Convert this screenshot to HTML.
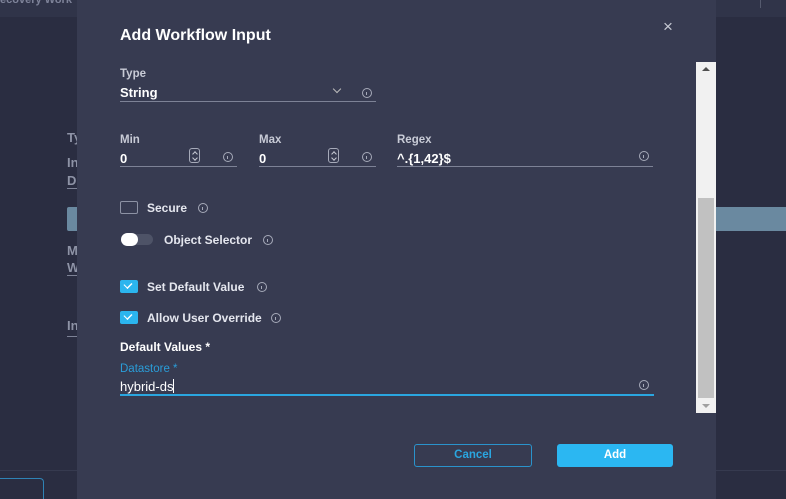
<!DOCTYPE html>
<html><head><style>
*{margin:0;padding:0;box-sizing:border-box}
html,body{width:786px;height:499px;overflow:hidden}
body{background:#2a2d41;font-family:"Liberation Sans",sans-serif;position:relative;color:#fff}
.a{position:absolute}
.topbar{left:0;top:0;width:786px;height:17px;background:#303449}
.ghost{color:#8e93a6;font-size:13px;font-weight:bold}
.modal{left:77px;top:0;width:639px;height:499px;background:#373b51}
.lbl{font-size:11.5px;color:#c8cbd6;font-weight:bold}
.val{font-size:13px;font-weight:bold;color:#fff}
.ul{height:1px;background:#7d8296}
.info{width:10px;height:10px;border:1.3px solid #a6aab9;border-radius:50%}
.info:after{content:"";position:absolute;left:3px;top:2.5px;width:1.3px;height:3px;background:#a6aab9}
.cb{width:18px;height:13px;border-radius:2px}
.cbt{font-size:12px;font-weight:bold;color:#e4e6ee}
.spin{width:11px;height:15px;border:1.2px solid #a6aab9;border-radius:3px}
.spin:before,.spin:after{content:"";position:absolute;left:2.5px;width:3px;height:3px;border-left:1px solid #c6c9d3;border-top:1px solid #c6c9d3}
.spin:before{top:2.5px;transform:rotate(45deg)}
.spin:after{top:7px;transform:rotate(225deg)}
</style></head><body>
<div class="a topbar"></div>
<div class="a ghost" style="left:0;top:-6px;font-size:11px;color:#7e8399">ecovery Work</div>
<div class="a ghost" style="left:67px;top:130px">Ty</div>
<div class="a ghost" style="left:67px;top:155px">In</div>
<div class="a ghost" style="left:67px;top:173px">D</div>
<div class="a" style="left:67px;top:188px;width:12px;height:1px;background:#7d8296"></div>
<div class="a" style="left:67px;top:207px;width:12px;height:24px;background:#6a89a0;border-radius:2px"></div>
<div class="a" style="left:716px;top:207px;width:70px;height:24px;background:#6a89a0"></div>
<div class="a ghost" style="left:67px;top:243px">M</div>
<div class="a ghost" style="left:67px;top:260px">W</div>
<div class="a" style="left:67px;top:275px;width:12px;height:1px;background:#7d8296"></div>
<div class="a ghost" style="left:67px;top:318px">In</div>
<div class="a" style="left:67px;top:336px;width:12px;height:1px;background:#7d8296"></div>
<div class="a" style="left:0;top:470px;width:786px;height:1px;background:#363a4f"></div>
<div class="a" style="left:-4px;top:478px;width:48px;height:21px;border:1px solid #2f83b5;border-bottom:none;border-radius:4px 4px 0 0"></div>
<div class="a" style="left:760px;top:0;width:1px;height:8px;background:#555a6e"></div>

<div class="a modal"></div>
<div class="a" style="left:120px;top:27px;font-size:16px;font-weight:bold">Add Workflow Input</div>
<div class="a" style="left:663px;top:17px;font-size:17px;color:#c7cad4">×</div>

<div class="a lbl" style="left:120px;top:68px">Type</div>
<div class="a val" style="left:120px;top:85px">String</div>
<div class="a" style="left:334px;top:86px;width:6px;height:6px;border-right:1.3px solid #bbb;border-bottom:1.3px solid #bbb;transform:rotate(45deg)"></div>
<div class="a info" style="left:362px;top:88px"></div>
<div class="a ul" style="left:120px;top:101px;width:256px"></div>

<div class="a lbl" style="left:120px;top:134px">Min</div>
<div class="a val" style="left:120px;top:151px">0</div>
<div class="a spin" style="left:189px;top:148px"></div>
<div class="a info" style="left:223px;top:152px"></div>
<div class="a ul" style="left:120px;top:166px;width:117px"></div>
<div class="a lbl" style="left:259px;top:134px">Max</div>
<div class="a val" style="left:259px;top:151px">0</div>
<div class="a spin" style="left:328px;top:148px"></div>
<div class="a info" style="left:362px;top:152px"></div>
<div class="a ul" style="left:259px;top:166px;width:117px"></div>
<div class="a lbl" style="left:397px;top:134px">Regex</div>
<div class="a val" style="left:397px;top:151px">^.{1,42}$</div>
<div class="a info" style="left:639px;top:151px"></div>
<div class="a ul" style="left:397px;top:166px;width:256px"></div>

<div class="a cb" style="left:120px;top:201px;border:1.2px solid #8d92a4"></div>
<div class="a cbt" style="left:147px;top:201px">Secure</div>
<div class="a info" style="left:198px;top:203px"></div>

<div class="a" style="left:121px;top:234px;width:32px;height:11px;border-radius:6px;background:#4e5367"></div>
<div class="a" style="left:121px;top:233px;width:17px;height:13px;border-radius:7px;background:#fff"></div>
<div class="a cbt" style="left:164px;top:233px">Object Selector</div>
<div class="a info" style="left:263px;top:235px"></div>

<div class="a cb" style="left:120px;top:280px;background:#2bb5ee"></div>
<div class="a" style="left:126px;top:281px;width:4px;height:7px;border-right:1.3px solid #fff;border-bottom:1.3px solid #fff;transform:rotate(45deg) scaleX(1.4)"></div>
<div class="a cbt" style="left:147px;top:280px">Set Default Value</div>
<div class="a info" style="left:257px;top:282px"></div>
<div class="a cb" style="left:120px;top:311px;background:#2bb5ee"></div>
<div class="a" style="left:126px;top:312px;width:4px;height:7px;border-right:1.3px solid #fff;border-bottom:1.3px solid #fff;transform:rotate(45deg) scaleX(1.4)"></div>
<div class="a cbt" style="left:147px;top:311px">Allow User Override</div>
<div class="a info" style="left:271px;top:313px"></div>

<div class="a cbt" style="left:120px;top:340px;color:#fff">Default Values *</div>
<div class="a" style="left:120px;top:363px;font-size:11.5px;color:#2a9dd8">Datastore *</div>
<div class="a val" style="left:120px;top:379px;font-weight:normal">hybrid-ds<span style="display:inline-block;width:1px;height:14px;background:#fff;vertical-align:-2px"></span></div>
<div class="a info" style="left:639px;top:380px"></div>
<div class="a" style="left:120px;top:394px;width:534px;height:2px;background:#2aa6e0"></div>

<div class="a" style="left:696px;top:62px;width:20px;height:351px;background:#f1f1f1"></div>
<div class="a" style="left:698px;top:198px;width:16px;height:200px;background:#c1c1c1"></div>
<div class="a" style="left:702px;top:67px;border-left:4px solid transparent;border-right:4px solid transparent;border-bottom:4px solid #505050"></div>
<div class="a" style="left:702px;top:404px;border-left:4px solid transparent;border-right:4px solid transparent;border-top:4px solid #a0a0a0"></div>

<div class="a" style="left:414px;top:444px;width:118px;height:23px;border:1.3px solid #2a93cc;border-radius:3px;color:#2aa6e0;font-size:11.5px;font-weight:bold;text-align:center;line-height:21px">Cancel</div>
<div class="a" style="left:557px;top:444px;width:116px;height:23px;background:#2bb7f2;border-radius:3px;color:#fff;font-size:11.5px;font-weight:bold;text-align:center;line-height:23px">Add</div>
</body></html>
